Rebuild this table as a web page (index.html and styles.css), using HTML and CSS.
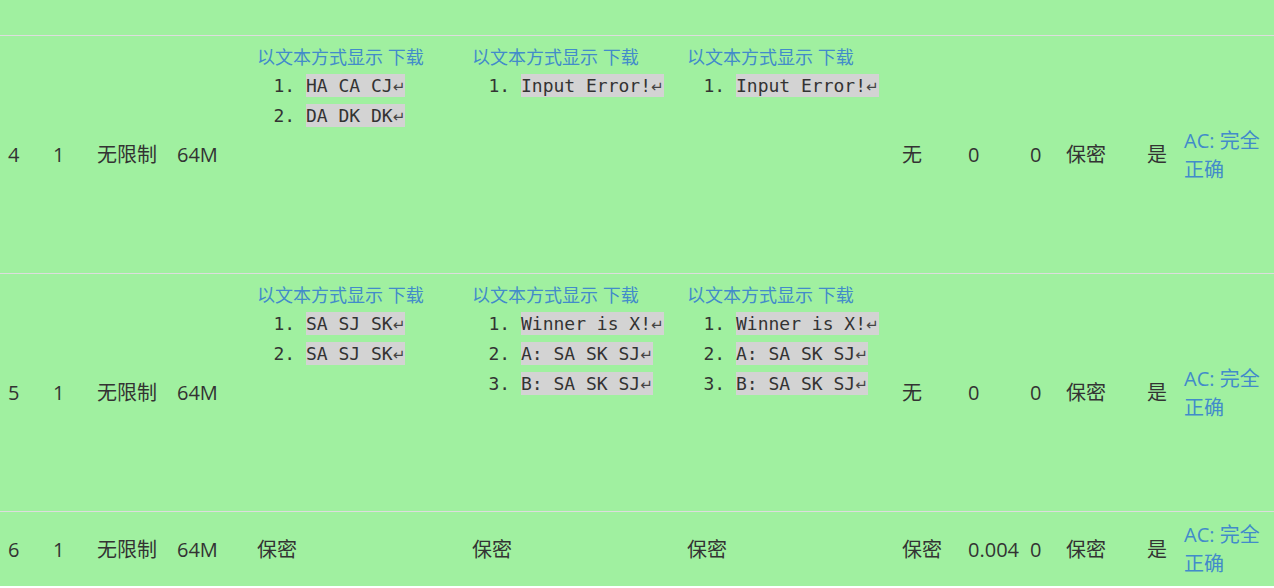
FILE: index.html
```html
<!DOCTYPE html>
<html lang="zh-CN">
<head>
<meta charset="utf-8">
<title>评测结果</title>
<link rel="stylesheet" href="styles.css">
</head>
<body>
<table class="res">
  <colgroup>
    <col class="c1"><col class="c2"><col class="c3"><col class="c4">
    <col class="c5"><col class="c6"><col class="c7"><col class="c8">
    <col class="c9"><col class="c10"><col class="c11"><col class="c12"><col class="c13">
  </colgroup>
  <tbody>
    <tr class="ac">
      <td class="spacer" colspan="13"><div class="spacer-box"></div></td>
    </tr>
    <tr class="ac">
      <td>4</td><td>1</td><td>无限制</td><td>64M</td>
      <td class="io">
        <div class="links"><a href="#">以文本方式显示</a> <a href="#">下载</a></div>
        <div class="box"><ol>
          <li><span class="code">HA CA CJ<span class="ret">↵</span></span></li>
          <li><span class="code">DA DK DK<span class="ret">↵</span></span></li>
        </ol></div>
      </td>
      <td class="io">
        <div class="links"><a href="#">以文本方式显示</a> <a href="#">下载</a></div>
        <div class="box"><ol>
          <li><span class="code">Input Error!<span class="ret">↵</span></span></li>
        </ol></div>
      </td>
      <td class="io">
        <div class="links"><a href="#">以文本方式显示</a> <a href="#">下载</a></div>
        <div class="box"><ol>
          <li><span class="code">Input Error!<span class="ret">↵</span></span></li>
        </ol></div>
      </td>
      <td>无</td><td>0</td><td>0</td><td>保密</td><td>是</td>
      <td><a href="#">AC: 完全正确</a></td>
    </tr>
    <tr class="ac">
      <td>5</td><td>1</td><td>无限制</td><td>64M</td>
      <td class="io">
        <div class="links"><a href="#">以文本方式显示</a> <a href="#">下载</a></div>
        <div class="box"><ol>
          <li><span class="code">SA SJ SK<span class="ret">↵</span></span></li>
          <li><span class="code">SA SJ SK<span class="ret">↵</span></span></li>
        </ol></div>
      </td>
      <td class="io">
        <div class="links"><a href="#">以文本方式显示</a> <a href="#">下载</a></div>
        <div class="box"><ol>
          <li><span class="code">Winner is X!<span class="ret">↵</span></span></li>
          <li><span class="code">A: SA SK SJ<span class="ret">↵</span></span></li>
          <li><span class="code">B: SA SK SJ<span class="ret">↵</span></span></li>
        </ol></div>
      </td>
      <td class="io">
        <div class="links"><a href="#">以文本方式显示</a> <a href="#">下载</a></div>
        <div class="box"><ol>
          <li><span class="code">Winner is X!<span class="ret">↵</span></span></li>
          <li><span class="code">A: SA SK SJ<span class="ret">↵</span></span></li>
          <li><span class="code">B: SA SK SJ<span class="ret">↵</span></span></li>
        </ol></div>
      </td>
      <td>无</td><td>0</td><td>0</td><td>保密</td><td>是</td>
      <td><a href="#">AC: 完全正确</a></td>
    </tr>
    <tr class="ac">
      <td>6</td><td>1</td><td>无限制</td><td>64M</td>
      <td>保密</td><td>保密</td><td>保密</td>
      <td>保密</td><td>0.004</td><td>0</td><td>保密</td><td>是</td>
      <td><a href="#">AC: 完全正确</a></td>
    </tr>
  </tbody>
</table>
</body>
</html>
```
FILE: styles.css
```css
html, body {
  margin: 0;
  padding: 0;
  background: #ffffff;
}

body {
  font-family: "Open Sans", "Noto Sans CJK SC", sans-serif;
  font-size: 20px;
  line-height: 29px;
  color: #333333;
}

a {
  color: #428bca;
  text-decoration: none;
}

.res {
  width: 1274px;
  table-layout: fixed;
  border-collapse: separate;
  border-spacing: 0;
}

.c1 { width: 45px; }
.c2 { width: 44px; }
.c3 { width: 80px; }
.c4 { width: 80px; }
.c5 { width: 215px; }
.c6 { width: 215px; }
.c7 { width: 215px; }
.c8 { width: 66px; }
.c9 { width: 62px; }
.c10 { width: 36px; }
.c11 { width: 81px; }
.c12 { width: 37px; }
.c13 { width: 98px; }

.ac td {
  background: #a0f0a0;
}

.res td {
  padding: 8px;
  border-top: 1px solid #dddddd;
  vertical-align: middle;
  white-space: normal;
}

.res td.spacer {
  padding: 0;
  border-top: none;
}

.spacer-box {
  height: 35px;
}

.res td.io {
  vertical-align: top;
}

.links {
  font-size: 18px;
  line-height: 27px;
  white-space: nowrap;
}

.box {
  min-height: 194px;
}

.box ol {
  margin: 0;
  padding: 0 0 0 49px;
  font-family: "DejaVu Sans Mono", "Liberation Mono", monospace;
  font-size: 18px;
  line-height: 30px;
  color: #333333;
}

.box li {
  height: 30px;
}

.code {
  background: #d3d3d3;
  padding: 1px 0;
  white-space: pre;
}

.ret {
  font-family: "DejaVu Sans", sans-serif;
  font-size: 15px;
  line-height: 1;
  color: #444444;
}
```
